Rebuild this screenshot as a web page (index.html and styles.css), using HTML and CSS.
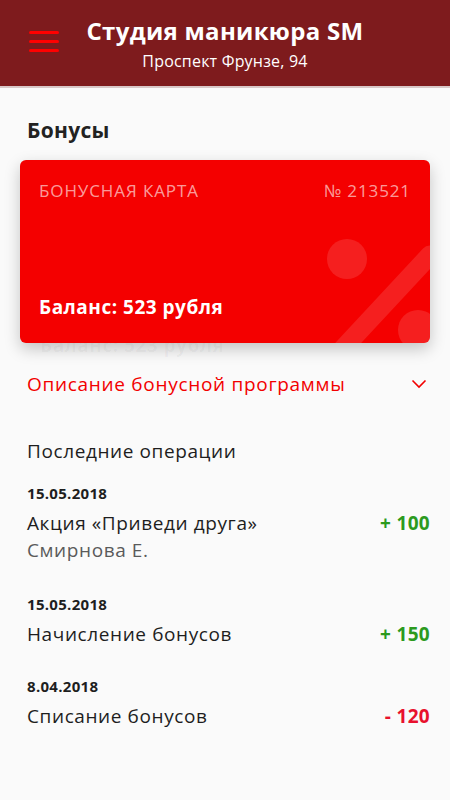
FILE: index.html
```html
<!DOCTYPE html>
<html lang="ru">
<head>
  <meta charset="UTF-8" />
  <meta name="viewport" content="width=device-width, initial-scale=1.0" />
  <title>Бонусы</title>
  <link rel="stylesheet" href="styles.css">
</head>
<body>
  <header class="topbar">
    <button class="menu-btn" aria-label="Меню">
      <span></span><span></span><span></span>
    </button>
    <div class="topbar-text">
      <h1>Студия маникюра SM</h1>
      <p>Проспект Фрунзе, 94</p>
    </div>
  </header>

  <main class="content">
    <h2 class="page-title">Бонусы</h2>

    <div class="card-wrap">
      <div class="bonus-card">
        <svg class="card-deco" viewBox="0 0 410 183" width="410" height="183">
          <circle cx="327" cy="99" r="20" />
          <line x1="317" y1="195" x2="410" y2="95" />
          <circle cx="398" cy="170" r="20" />
        </svg>
        <div class="card-top">
          <span>БОНУСНАЯ КАРТА</span>
          <span>№ 213521</span>
        </div>
        <div class="card-balance">Баланс: 523 рубля</div>
      </div>
      <div class="card-ghost">Баланс: 523 рубля</div>
    </div>

    <div class="program-row">
      <span>Описание бонусной программы</span>
      <svg width="16" height="10" viewBox="0 0 16 10">
        <polyline points="1.5,1.5 8,8 14.5,1.5" />
      </svg>
    </div>

    <h3 class="ops-title">Последние операции</h3>

    <div class="op">
      <div class="op-date">15.05.2018</div>
      <div class="op-row">
        <div>
          <div class="op-name">Акция «Приведи друга»</div>
          <div class="op-sub">Смирнова Е.</div>
        </div>
        <div class="op-sum plus">+ 100</div>
      </div>
    </div>

    <div class="op">
      <div class="op-date">15.05.2018</div>
      <div class="op-row">
        <div class="op-name">Начисление бонусов</div>
        <div class="op-sum plus">+ 150</div>
      </div>
    </div>

    <div class="op">
      <div class="op-date">8.04.2018</div>
      <div class="op-row">
        <div class="op-name">Списание бонусов</div>
        <div class="op-sum minus">- 120</div>
      </div>
    </div>
  </main>
</body>
</html>
```

FILE: styles.css
```css
body {
  font-family: "Open Sans", Arial, sans-serif;
  background: #fafafa;
  color: #1e1e1e;
  margin: 0;
}
.topbar {
  background: #7e1b1d;
  height: 86px;
  border-bottom: 2px solid #d8c8c8;
  display: flex;
  align-items: center;
  color: #fff;
}
.menu-btn {
  background: none;
  border: none;
  padding: 0;
  margin: 0 0 4px 29px;
  width: 30px;
  display: flex;
  flex-direction: column;
  gap: 6px;
}
.menu-btn span {
  display: block;
  height: 3px;
  background: #ff0000;
  border-radius: 2px;
}
.topbar-text {
  flex: 1;
  text-align: center;
  margin-right: 59px;
}
.topbar h1 {
  margin: 0;
  font-size: 24px;
  font-weight: 700;
  line-height: 30px;
  letter-spacing: 0.3px;
}
.topbar p {
  margin: 6px 0 0;
  font-size: 16px;
  line-height: 18px;
  letter-spacing: 0.2px;
}
.content {
  padding: 0 20px 0 27px;
}
.page-title {
  margin: 28px 0 0;
  font-size: 21px;
  font-weight: 700;
  line-height: 28px;
  color: #222;
  letter-spacing: 0.3px;
}
.card-wrap {
  margin: 16px 0 0 -7px;
  position: relative;
}
.bonus-card {
  position: relative;
  z-index: 1;
  height: 183px;
  background: #f40000;
  border-radius: 6px;
  box-shadow: 0 6px 16px rgba(0,0,0,0.22);
  overflow: hidden;
  color: #fff;
  padding: 0 19px;
  box-sizing: border-box;
}
.card-deco {
  position: absolute;
  left: 0;
  top: 0;
}
.card-deco circle {
  fill: rgba(255,255,255,0.12);
}
.card-deco line {
  stroke: rgba(255,255,255,0.12);
  stroke-width: 19;
  stroke-linecap: round;
}
.card-top {
  position: relative;
  display: flex;
  justify-content: space-between;
  padding-top: 20px;
  font-size: 17px;
  line-height: 22px;
  letter-spacing: 0.9px;
  color: rgba(255,255,255,0.62);
}
.card-balance {
  position: relative;
  margin-top: 93px;
  font-size: 19px;
  font-weight: 700;
  line-height: 24px;
  letter-spacing: 0.5px;
}
.card-ghost {
  margin: -10px 0 0 20px;
  font-size: 19px;
  font-weight: 700;
  line-height: 24px;
  letter-spacing: 0.5px;
  color: rgba(0,0,0,0.04);
}
.program-row {
  display: flex;
  justify-content: space-between;
  align-items: center;
  margin-top: 14px;
  color: #f20000;
  font-size: 19px;
  line-height: 26px;
  letter-spacing: 0.7px;
}
.program-row svg {
  margin-right: 3px;
}
.program-row polyline {
  fill: none;
  stroke: #f20000;
  stroke-width: 1.6;
}
.ops-title {
  margin: 41px 0 0;
  font-size: 19px;
  font-weight: 400;
  line-height: 26px;
  letter-spacing: 0.6px;
  color: #1e1e1e;
}
.op {
  margin-top: 20px;
}
.op + .op {
  margin-top: 31px;
}
.op + .op + .op {
  margin-top: 29px;
}
.op-date {
  font-size: 15px;
  font-weight: 700;
  line-height: 18px;
  letter-spacing: 0.3px;
}
.op-row {
  display: flex;
  justify-content: space-between;
  align-items: flex-start;
  margin-top: 8px;
}
.op-name {
  font-size: 19px;
  line-height: 27px;
  letter-spacing: 0.6px;
}
.op-sub {
  font-size: 19px;
  line-height: 27px;
  letter-spacing: 0.6px;
  color: #5a5a5a;
}
.op-sum {
  font-size: 19px;
  font-weight: 700;
  line-height: 27px;
  letter-spacing: 0.3px;
}
.plus {
  color: #2c9a1e;
}
.minus {
  color: #e8112d;
}
```
